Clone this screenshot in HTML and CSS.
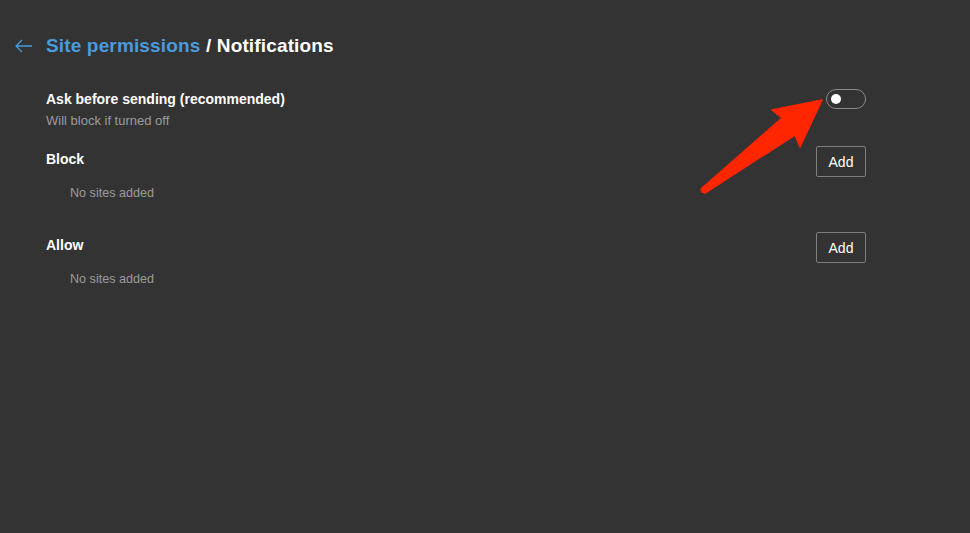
FILE: index.html
```html
<!DOCTYPE html>
<html>
<head>
<meta charset="utf-8">
<link rel="stylesheet" href="styles.css">
</head>
<body>
<div class="page">
  <div class="header">
    <svg class="back" width="20" height="16" viewBox="0 0 20 16"><path d="M18 8H2M8 2L2 8l6 6" fill="none" stroke="#4a9ade" stroke-width="1.3"/></svg>
    <h1 class="title"><span class="crumb">Site permissions</span> / Notifications</h1>
  </div>
  <div class="content">
    <div class="row ask">
      <div>
        <div class="label">Ask before sending (recommended)</div>
        <div class="sub">Will block if turned off</div>
      </div>
      <div class="toggle"><span class="knob"></span></div>
    </div>
    <div class="section">
      <div class="row">
        <div class="label">Block</div>
        <button class="add">Add</button>
      </div>
      <div class="empty">No sites added</div>
    </div>
    <div class="section">
      <div class="row">
        <div class="label">Allow</div>
        <button class="add">Add</button>
      </div>
      <div class="empty">No sites added</div>
    </div>
  </div>
</div>
<svg class="arrow" width="970" height="533" viewBox="0 0 970 533">
  <polygon points="822,100 772,110 782,118 701,189 702,192 705,193 795,135 800,147" fill="#ff2600" stroke="#ff2600" stroke-width="1.5" stroke-linejoin="round"/>
</svg>
</body>
</html>
```
FILE: styles.css
```css
html, body {
  margin: 0;
  padding: 0;
  background: #333333;
  width: 970px;
  height: 533px;
  overflow: hidden;
  font-family: "Liberation Sans", Arial, sans-serif;
}
.page {
  padding: 33px 104px 0 14px;
}
.header {
  display: flex;
  align-items: center;
  height: 26px;
}
.back {
  width: 20px;
  height: 16px;
  margin-right: 12px;
}
.title {
  margin: 0;
  font-size: 19px;
  font-weight: bold;
  color: #ffffff;
  letter-spacing: 0.15px;
}
.crumb {
  color: #4a9ade;
}
.content {
  padding-left: 32px;
  margin-top: 31px;
}
.row {
  display: flex;
  justify-content: space-between;
  align-items: flex-start;
}
.label {
  font-size: 14px;
  font-weight: bold;
  color: #ffffff;
  line-height: 18px;
}
.sub {
  font-size: 13px;
  color: #9b9b9b;
  line-height: 16px;
  margin-top: 5px;
}
.ask .toggle {
  margin-top: -1px;
}
.toggle {
  height: 18px;
  border: 1px solid #8a8a8a;
  border-radius: 10px;
  display: flex;
  align-items: center;
  padding-left: 4px;
  box-sizing: content-box;
  width: 34px;
}
.knob {
  width: 10px;
  height: 10px;
  border-radius: 50%;
  background: #ffffff;
}
.section {
  margin-top: 17px;
}
.section + .section {
  margin-top: 31px;
}
.section .row {
  align-items: center;
  height: 31px;
}
.section .label {
  margin-top: -5px;
}
.add {
  width: 50px;
  height: 31px;
  background: transparent;
  border: 1px solid #7e7e7e;
  border-radius: 2px;
  color: #ffffff;
  font-family: inherit;
  font-size: 14px;
  padding: 0;
}
.empty {
  padding-left: 24px;
  font-size: 12.6px;
  color: #9b9b9b;
  line-height: 16px;
  margin-top: 8px;
}
.arrow {
  position: absolute;
  left: 0;
  top: 0;
  pointer-events: none;
}
```
